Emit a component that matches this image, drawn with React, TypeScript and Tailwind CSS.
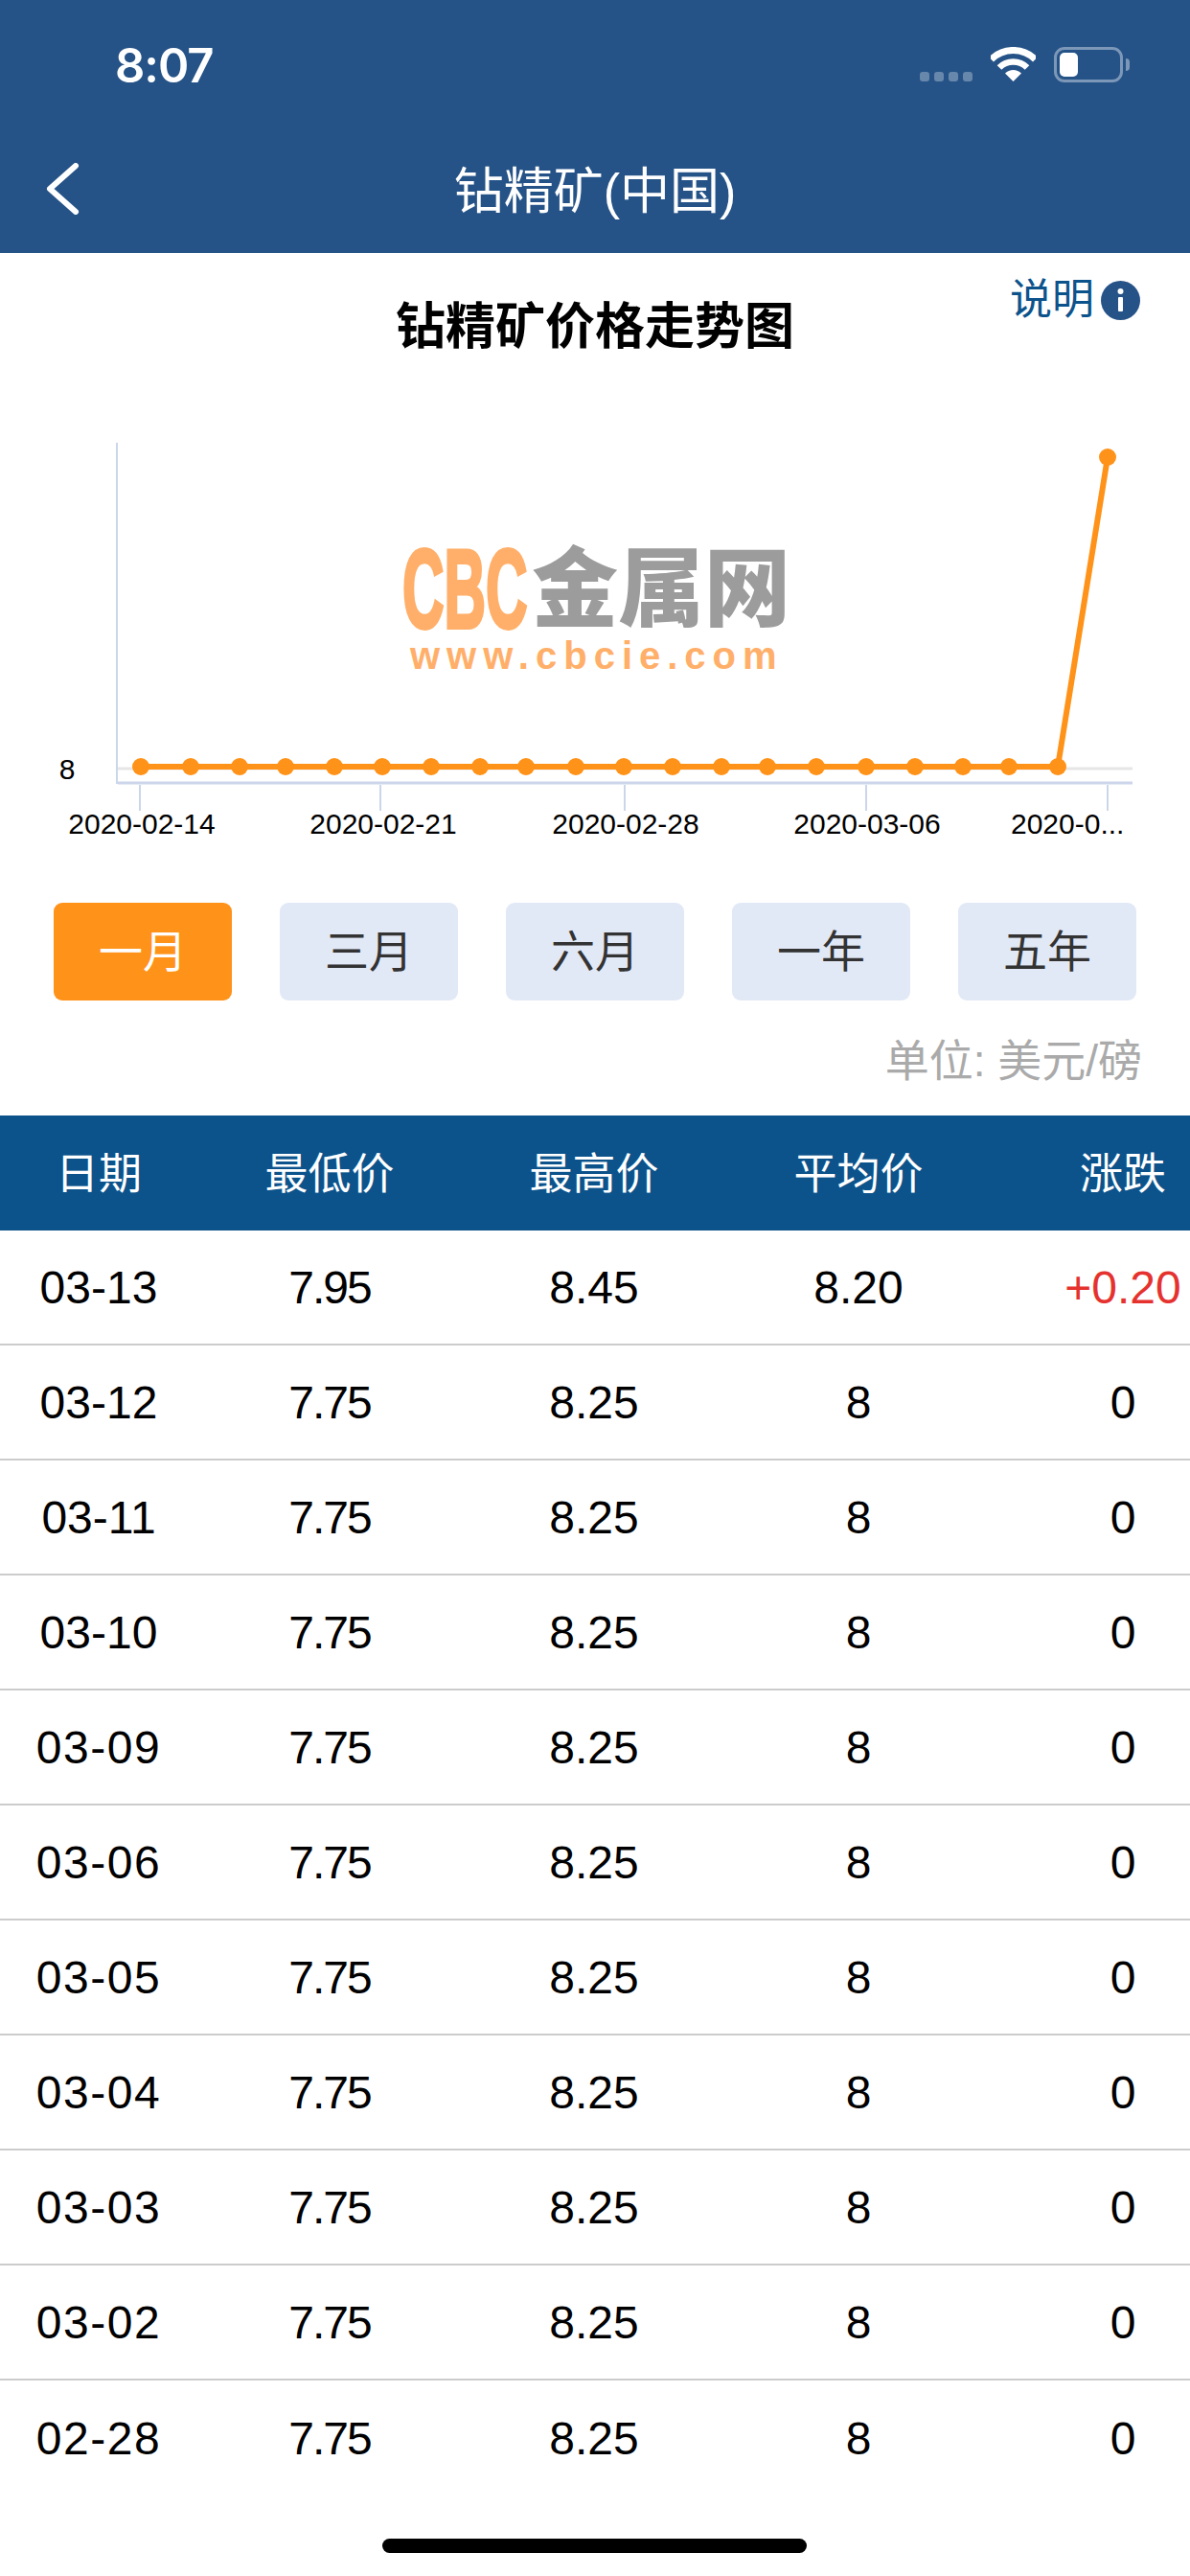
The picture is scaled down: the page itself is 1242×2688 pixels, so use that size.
import React from "react";

type Row = {
  date: string;
  low: string;
  high: string;
  avg: string;
  change: string;
};

const rows: Row[] = [
  { date: "03-13", low: "7.95", high: "8.45", avg: "8.20", change: "+0.20" },
  { date: "03-12", low: "7.75", high: "8.25", avg: "8", change: "0" },
  { date: "03-11", low: "7.75", high: "8.25", avg: "8", change: "0" },
  { date: "03-10", low: "7.75", high: "8.25", avg: "8", change: "0" },
  { date: "03-09", low: "7.75", high: "8.25", avg: "8", change: "0" },
  { date: "03-06", low: "7.75", high: "8.25", avg: "8", change: "0" },
  { date: "03-05", low: "7.75", high: "8.25", avg: "8", change: "0" },
  { date: "03-04", low: "7.75", high: "8.25", avg: "8", change: "0" },
  { date: "03-03", low: "7.75", high: "8.25", avg: "8", change: "0" },
  { date: "03-02", low: "7.75", high: "8.25", avg: "8", change: "0" },
  { date: "02-28", low: "7.75", high: "8.25", avg: "8", change: "0" },
];

const ranges = ["一月", "三月", "六月", "一年", "五年"];

const pointsX = [
  147, 199, 250, 298, 349, 399, 450, 501, 549, 601, 651, 702, 753, 801, 852, 904, 955, 1005, 1053, 1104,
];

const ticks = [
  { x: 146, label: "2020-02-14", lx: 148 },
  { x: 397, label: "2020-02-21", lx: 400 },
  { x: 652, label: "2020-02-28", lx: 653 },
  { x: 904, label: "2020-03-06", lx: 905 },
];

const StatusBar: React.FC = () => (
  <div className="flex h-[134px] items-start justify-between pl-[120px] pr-[70px] pt-[46px]">
    <span className="text-[49px] font-semibold leading-[46px] tracking-[-1px] text-white font-['Inter',sans-serif]">8:07</span>
    <div className="flex items-start pt-[3px]">
      <div className="mt-[26px] flex gap-[5px]">
        <div className="h-[10px] w-[10px] rounded-[3px] bg-white/30" />
        <div className="h-[10px] w-[10px] rounded-[3px] bg-white/30" />
        <div className="h-[10px] w-[10px] rounded-[3px] bg-white/30" />
        <div className="h-[10px] w-[10px] rounded-[3px] bg-white/30" />
      </div>
      <svg className="ml-[19px]" width="47" height="36" viewBox="0 0 47 36">
        <path d="M0.5 13 A32.5 32.5 0 0 1 46.5 13" fill="none" stroke="#fff" strokeWidth="7" />
        <path d="M9 21.5 A20.5 20.5 0 0 1 38 21.5" fill="none" stroke="#fff" strokeWidth="6.5" />
        <path d="M23.5 36 L15 27.5 A12 12 0 0 1 32 27.5 Z" fill="#fff" />
      </svg>
      <div className="relative ml-[19px] flex h-[37px] w-[72px] items-center rounded-[11px] border-[3px] border-white/40 pl-[3px]">
        <div className="h-[25px] w-[19px] rounded-[5px] bg-white" />
        <div className="absolute right-[-10px] top-[9px] h-[13px] w-[4px] rounded-r-[4px] bg-white/40" />
      </div>
    </div>
  </div>
);

const NavBar: React.FC = () => (
  <div className="bg-[#265387]">
    <StatusBar />
    <div className="relative flex h-[130px] items-center justify-center pt-[2px]">
      <svg className="absolute left-[48px] top-[36px]" width="36" height="54" viewBox="0 0 36 54">
        <path d="M31 3 L4 27 L31 51" fill="none" stroke="#fff" strokeWidth="6" strokeLinecap="round" strokeLinejoin="round" />
      </svg>
      <span className="text-[52px] leading-none text-white">钻精矿(中国)</span>
    </div>
  </div>
);

const PriceChart: React.FC = () => (
  <div className="relative h-[484px]">
    <svg className="block" width="1242" height="484" viewBox="0 416 1242 484">
      <line x1="122" y1="462" x2="122" y2="818" stroke="#ccd6eb" strokeWidth="2" />
      <line x1="123" y1="802" x2="1182" y2="802" stroke="#e6e6e6" strokeWidth="3" />
      <line x1="123" y1="817" x2="1182" y2="817" stroke="#ccd6eb" strokeWidth="3" />
      {ticks.map((t) => (
        <line key={t.x} x1={t.x} y1="819" x2={t.x} y2="846" stroke="#ccd6eb" strokeWidth="2" />
      ))}
      <line x1="1156" y1="819" x2="1156" y2="846" stroke="#ccd6eb" strokeWidth="2" />
      <polyline
        points={pointsX.map((x) => `${x},800`).join(" ") + " 1156,477"}
        fill="none"
        stroke="#ff9218"
        strokeWidth="6"
      />
      {pointsX.map((x) => (
        <circle key={x} cx={x} cy="800" r="9" fill="#ff9218" />
      ))}
      <circle cx="1156" cy="477" r="9" fill="#ff9218" />
      <text x="70" y="813" textAnchor="middle" fontSize="30" fill="#000">8</text>
      {ticks.map((t) => (
        <text key={t.label} x={t.lx} y="870" textAnchor="middle" fontSize="30" fill="#000">
          {t.label}
        </text>
      ))}
      <text x="1055" y="870" fontSize="30" fill="#000">2020-0...</text>
    </svg>
    {/* watermark over the plot */}
    <div className="absolute left-[420px] top-[157px] flex h-[84px] items-center">
      <span className="w-[128px] origin-left scale-x-[0.52] whitespace-nowrap text-[116px] font-bold leading-[84px] text-[#ffaf69] [-webkit-text-stroke:4px_#ffaf69]">CBC</span>
      <span className="ml-[7px] whitespace-nowrap text-[90px] font-black leading-[84px] text-[#9c9c9c]">金属网</span>
    </div>
    <div className="absolute left-[428px] top-[246px] whitespace-nowrap text-[40px] font-bold leading-[44px] tracking-[7px] text-[#ffaf69] font-['Liberation_Sans',sans-serif]">
      www.cbcie.com
    </div>
  </div>
);

const RangeTabs: React.FC = () => (
  <div className="mt-[42px] flex h-[102px] justify-between px-[56px]">
    {ranges.map((r, i) => (
      <div
        key={r}
        className={
          i === 0
            ? "flex w-[186px] items-center justify-center rounded-[9px] bg-[#ff9218] text-[46px] text-white"
            : "flex w-[186px] items-center justify-center rounded-[9px] bg-[#e2e9f6] text-[46px] text-[#333333]"
        }
      >
        {r}
      </div>
    ))}
  </div>
);

const PriceTable: React.FC = () => (
  <div className="overflow-hidden">
    <div className="grid h-[120px] w-[1310px] grid-cols-[206px_276px_276px_276px_276px] items-center bg-[#0c538c] pt-[3px] text-center text-[45px] text-white">
      <span>日期</span>
      <span>最低价</span>
      <span>最高价</span>
      <span>平均价</span>
      <span>涨跌</span>
    </div>
    {rows.map((row, i) => (
      <div
        key={row.date}
        className={
          i === rows.length - 1
            ? "grid h-[120px] w-[1310px] grid-cols-[206px_276px_276px_276px_276px] items-center pt-[2px] text-center text-[48px] text-black"
            : "grid h-[120px] w-[1310px] grid-cols-[206px_276px_276px_276px_276px] items-center border-b-2 border-[#cccccc] pt-[2px] text-center text-[48px] text-black"
        }
      >
        <span className={row.date.includes("1") ? "" : "tracking-[1.5px]"}>{row.date}</span>
        <span className="tracking-[-2px]">{row.low}</span>
        <span>{row.high}</span>
        <span>{row.avg}</span>
        <span className={row.change === "0" ? "" : "text-[#e5322e]"}>{row.change}</span>
      </div>
    ))}
  </div>
);

const App: React.FC = () => {
  return (
    <div className="relative h-[2688px] w-[1242px] overflow-hidden bg-white font-['Liberation_Sans','Noto_Sans_CJK_SC',sans-serif]">
      <NavBar />

      <div className="relative">
        <div className="flex h-[152px] items-center justify-center pt-[2px] text-[52px] font-bold leading-none text-black">钻精矿价格走势图</div>
        <div className="absolute right-[52px] top-[27px] flex items-center gap-[7px]">
          <span className="text-[44px] leading-[44px] text-[#0c538c]">说明</span>
          <svg width="41" height="41" viewBox="0 0 41 41">
            <circle cx="20.5" cy="20.5" r="20.5" fill="#265387" />
            <circle cx="20.5" cy="11" r="3" fill="#fff" />
            <rect x="18" y="17" width="5" height="15" rx="1" fill="#fff" />
          </svg>
        </div>
      </div>

      <PriceChart />
      <RangeTabs />

      <div className="flex h-[120px] items-center justify-end pr-[50px] pt-[6px] text-[46px] text-[#aaaaaa]">单位: 美元/磅</div>

      <PriceTable />

      <div className="absolute bottom-[24px] left-[399px] h-[15px] w-[443px] rounded-full bg-black" />
    </div>
  );
};

export default App;
